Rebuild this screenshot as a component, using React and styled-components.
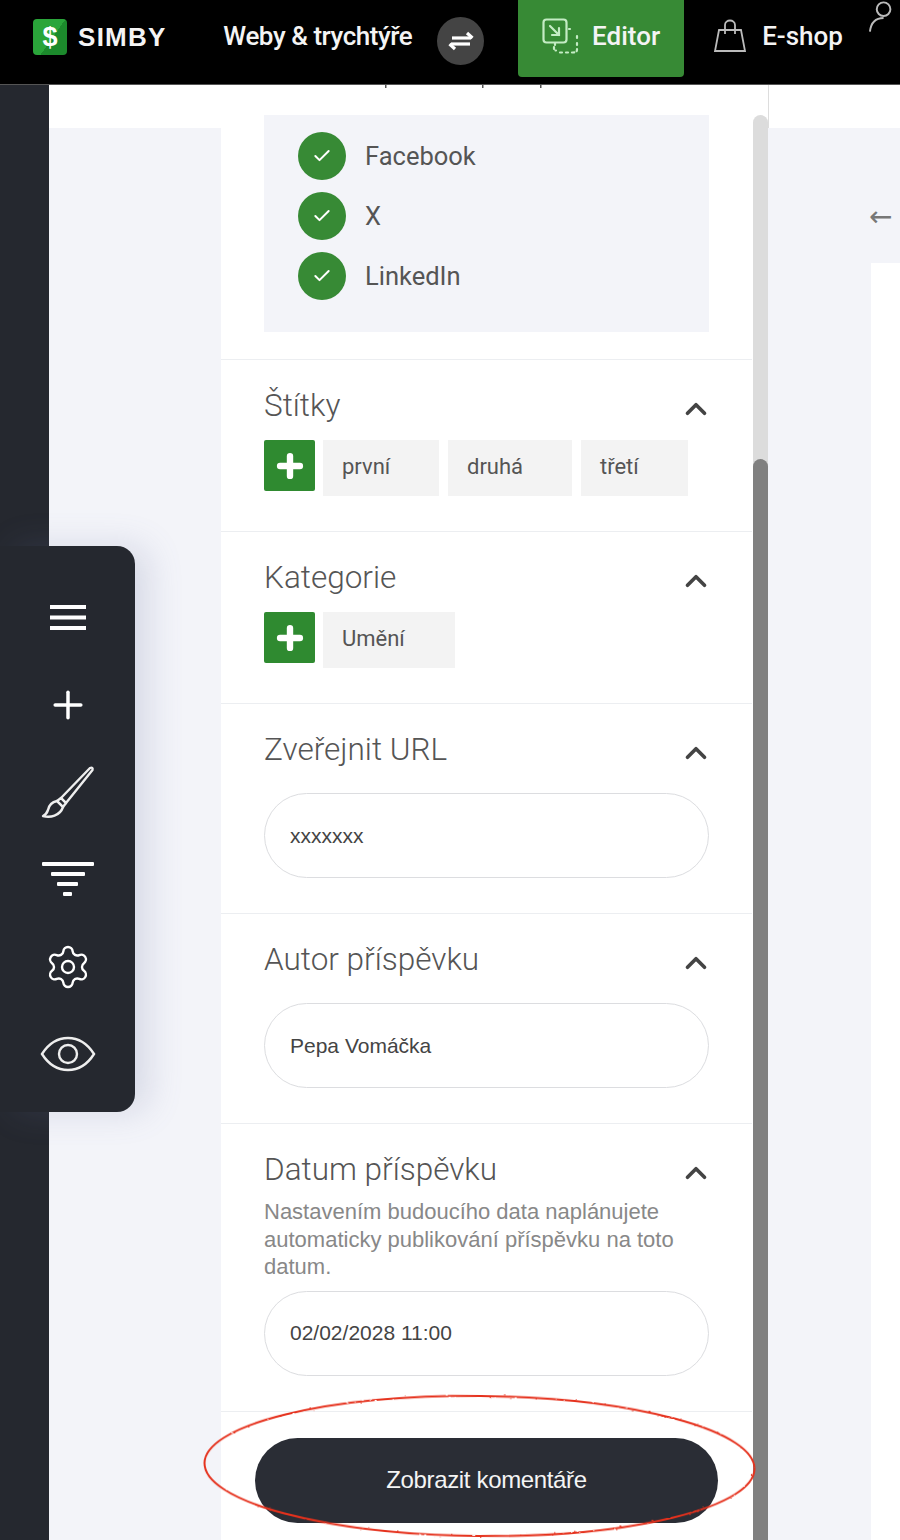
import styled, { createGlobalStyle } from "styled-components";
import { Check, ChevronUp, Plus, Settings } from "lucide-react";

const GlobalStyle = createGlobalStyle`
  html, body { margin: 0; padding: 0; background: #fff; }
  * { box-sizing: border-box; }
`;

const Page = styled.div`
  position: relative;
  width: 900px;
  height: 1540px;
  overflow: hidden;
  font-family: Roboto, "Liberation Sans", sans-serif;
`;

const Header = styled.header`
  display: flex;
  align-items: flex-start;
  height: 85px;
  padding-left: 33px;
  background: #000;
  color: #f4f4f4;
  border-bottom: 1px solid #555;
  white-space: nowrap;
`;

const Logo = styled.div`
  display: flex;
  align-items: center;
  justify-content: center;
  width: 35px;
  height: 36px;
  margin-top: 19px;
  border-radius: 4px;
  background: linear-gradient(125deg, #2aa53a 55%, #1c8a2c 55%);
  color: #fff;
  font: 700 27px "Liberation Sans", sans-serif;
`;

const Brand = styled.div`
  margin: 22px 0 0 11px;
  font: 700 26px/30px "Liberation Sans", sans-serif;
  letter-spacing: 1.2px;
  width: 149px;
`;

const NavText = styled.span`
  font-size: 26px;
  font-weight: 500;
  line-height: 30px;
`;

const SiteLink = styled(NavText)`
  margin-top: 21px;
  letter-spacing: -0.45px;
`;

const SwapButton = styled.div`
  display: flex;
  align-items: center;
  justify-content: center;
  width: 48px;
  height: 48px;
  margin: 17px 0 0 25px;
  border-radius: 50%;
  background: #444;
`;

const NavTab = styled.div`
  display: flex;
  align-items: center;
  gap: ${(p) => p.$gap}px;
  height: 77px;
  margin-left: ${(p) => p.$offset}px;
  padding: 0 24px 5px;
  border-radius: 0 0 4px 4px;
  background: ${(p) => (p.$active ? "#378a35" : "transparent")};
`;

const Main = styled.div`
  position: relative;
  display: flex;
  height: 1455px;
`;

const Rail = styled.div`
  width: 49px;
  background: #25282f;
`;

const Flyout = styled.nav`
  position: absolute;
  z-index: 1;
  left: 0;
  top: 461px;
  display: flex;
  flex-direction: column;
  align-items: center;
  width: 135px;
  height: 566px;
  padding-top: 43px;
  border-radius: 0 18px 18px 0;
  background: #25282f;
  box-shadow: 14px 0 34px rgba(105, 115, 160, 0.2);
`;

const FlyoutItem = styled.div`
  display: flex;
  align-items: center;
  justify-content: center;
  width: 60px;
  height: 60px;
  margin-bottom: 29px;
  color: #fff;
`;

const Gutter = styled.div`
  display: flex;
  flex-direction: column;
  width: ${(p) => p.$width}px;
  flex: ${(p) => (p.$grow ? 1 : "none")};
  background: #f3f4f9;
`;

const GutterCap = styled.div`
  height: 43px;
  background: #fff;
  border-left: ${(p) => (p.$line ? "1px solid #ddd" : "none")};
`;

const BackArrow = styled.div`
  margin: 74px 0 0 101px;
  color: #777;
  font: 28px/30px "DejaVu Sans", sans-serif;
  height: 61px;
`;

const Sheet = styled.div`
  flex: 1;
  margin-left: 103px;
  background: #fff;
`;

const Panel = styled.div`
  position: relative;
  z-index: 2;
  width: 547px;
  display: flex;
  background: #fff;
`;

const PanelBody = styled.div`
  width: 531px;
`;

const ClippedMarks = styled.svg`
  display: block;
  width: 531px;
  height: 30px;
`;

const SocialBox = styled.div`
  display: flex;
  flex-direction: column;
  gap: 12px;
  height: 217px;
  margin: 0 43px 27px;
  padding: 17px 34px;
  background: #f3f4f9;
`;

const SocialRow = styled.div`
  display: flex;
  align-items: center;
  gap: 19px;
  height: 48px;
  color: #555;
  font-size: 25.5px;
`;

const CheckDot = styled.span`
  display: flex;
  align-items: center;
  justify-content: center;
  width: 48px;
  height: 48px;
  border-radius: 50%;
  background: #378a35;
  color: #fff;
`;

const Section = styled.section`
  padding: 27px 43px 35px;
  border-top: 1px solid #eceef1;
`;

const SectionHead = styled.div`
  display: flex;
  align-items: center;
  justify-content: space-between;
  height: 36px;
  margin-bottom: ${(p) => p.$space}px;
  color: #555;
  font-size: 31.5px;
  font-weight: 300;
`;

const Toggle = styled(ChevronUp)`
  margin: 8px -4px 0 0;
  color: #444;
`;

const TagRow = styled.div`
  display: flex;
  gap: 9px;
  height: 56px;
`;

const AddButton = styled.div`
  display: flex;
  align-items: center;
  justify-content: center;
  width: 51px;
  height: 51px;
  margin-right: -1px;
  border-radius: 2px;
  background: #2f8a30;
  color: #fff;
`;

const Tag = styled.div`
  width: ${(p) => p.$width}px;
  padding: 14px 19px;
  background: #f3f3f3;
  color: #555;
  font-size: 22px;
  line-height: 26px;
`;

const Field = styled.div`
  display: flex;
  align-items: center;
  height: 85px;
  padding: 0 25px;
  border: 1.5px solid #dcdde0;
  border-radius: 43px;
  color: #444;
  font: 21px "Liberation Sans", sans-serif;
`;

const Hint = styled.p`
  margin: 0 0 10px;
  color: #888;
  font: 22px/27.5px "Liberation Sans", sans-serif;
`;

const ScrollTrack = styled.div`
  display: flex;
  flex-direction: column;
  width: 15px;
  margin: 30px 0 0 1px;
  padding-top: 344px;
  border-radius: 8px 8px 0 0;
  background: #dcdcdc;
`;

const ScrollThumb = styled.div`
  flex: 1;
  border-radius: 8px 8px 0 0;
  background: #808080;
`;

const CommentsButton = styled.div`
  display: flex;
  align-items: center;
  justify-content: center;
  height: 85px;
  margin: 0 34px 0;
  border-radius: 43px;
  background: #2a2d35;
  color: #f4f4f4;
  font: 24px "Liberation Sans", sans-serif;
  letter-spacing: -0.35px;
`;

const ButtonWrap = styled.div`
  padding-top: 26px;
  border-top: 1px solid #eceef1;
`;

const Annotation = styled.svg`
  position: absolute;
  z-index: 3;
  left: 0;
  top: 0;
  pointer-events: none;
`;

const SwapIcon = () => (
  <svg width="30" height="24" viewBox="0 0 30 24" fill="none" stroke="#fff" strokeWidth="3.2">
    <path d="M6 9h19" />
    <path d="M21 4l5.5 5" />
    <path d="M24 15H5" />
    <path d="M9 20l-5.5-5" />
  </svg>
);

const EditorIcon = () => (
  <svg width="38" height="37" viewBox="0 0 38 37" fill="none" stroke="#c4ecc4" strokeWidth="2.2" strokeLinecap="round">
    <rect x="1.5" y="1.5" width="23" height="23" rx="3" />
    <path d="M8 8l9 9M17 10v7h-7" />
    <path d="M13 25v2M12 29v3.5h2M18 34.5h2M24 34.5h2M30 34.5h1c3 0 4-1 4-3v-1M35 25v2M35 18v2M27 11h1" strokeDasharray="2 3" />
  </svg>
);

const BagIcon = () => (
  <svg width="34" height="34" viewBox="0 0 34 34" fill="none" stroke="#bbb" strokeWidth="1.8">
    <path d="M6 11h22l4 21H2z" />
    <path d="M12 15V6c0-6 10-6 10 0v9" />
  </svg>
);

const PersonIcon = () => (
  <svg width="34" height="34" viewBox="0 0 34 34" fill="none" stroke="#bbb" strokeWidth="2">
    <circle cx="17" cy="9" r="7" />
    <path d="M3 32c1-9 6-14 14-14" />
  </svg>
);

const MenuIcon = () => (
  <svg width="36" height="28" viewBox="0 0 36 28" fill="#fff">
    <rect y="1" width="36" height="4" />
    <rect y="11.5" width="36" height="4" />
    <rect y="22" width="36" height="4" />
  </svg>
);

const BrushIcon = () => (
  <svg width="54" height="54" viewBox="0 0 54 54" fill="none" stroke="#eee" strokeWidth="2.4" strokeLinejoin="round">
    <path d="M20 33L49 3c2-1 3 0 2.500 2L25 38z" />
    <path d="M16 36l4-3 5 5-3 4z" />
    <path d="M16 36c-5 1-8 4-9 9-1 3-3 5-5 6 7 2 17 0 20-9z" />
  </svg>
);

const FunnelIcon = () => (
  <svg width="52" height="38" viewBox="0 0 52 38" fill="#fff">
    <rect y="1" width="52" height="4" rx="1" />
    <rect x="9" y="11" width="34" height="4" rx="1" />
    <rect x="15" y="21" width="21" height="4" rx="1" />
    <rect x="21" y="31" width="9" height="4" rx="1" />
  </svg>
);

const EyeIcon = () => (
  <svg width="56" height="36" viewBox="0 0 56 36" fill="none" stroke="#eee" strokeWidth="2.4">
    <path d="M2 18C9 7 18 2 28 2s19 5 26 16c-7 11-16 16-26 16S9 29 2 18z" />
    <circle cx="28" cy="18" r="9" />
  </svg>
);

const checks = ["Facebook", "X", "LinkedIn"];
const labels = [
  { text: "první", width: 116 },
  { text: "druhá", width: 124 },
  { text: "třetí", width: 107 },
];

const TagList = ({ tags }) => (
  <TagRow>
    <AddButton>
      <Plus size={34} strokeWidth={4.5} />
    </AddButton>
    {tags.map((t) => (
      <Tag key={t.text} $width={t.width}>
        {t.text}
      </Tag>
    ))}
  </TagRow>
);

const Head = ({ title, space = 17 }) => (
  <SectionHead $space={space}>
    {title}
    <Toggle size={34} strokeWidth={2.6} />
  </SectionHead>
);

export default function App() {
  return (
    <Page>
      <GlobalStyle />
      <Header>
        <Logo>$</Logo>
        <Brand>SIMBY</Brand>
        <SiteLink>Weby &amp; trychtýře</SiteLink>
        <SwapButton>
          <SwapIcon />
        </SwapButton>
        <NavTab $active $offset={34} $gap={12}>
          <EditorIcon />
          <NavText>Editor</NavText>
        </NavTab>
        <NavTab $offset={5} $gap={15}>
          <BagIcon />
          <NavText>E-shop</NavText>
        </NavTab>
        <PersonIcon />
      </Header>

      <Main>
        <Rail />
        <Flyout>
          <FlyoutItem>
            <MenuIcon />
          </FlyoutItem>
          <FlyoutItem>
            <Plus size={44} strokeWidth={1.9} />
          </FlyoutItem>
          <FlyoutItem>
            <BrushIcon />
          </FlyoutItem>
          <FlyoutItem>
            <FunnelIcon />
          </FlyoutItem>
          <FlyoutItem>
            <Settings size={48} strokeWidth={1.2} />
          </FlyoutItem>
          <FlyoutItem>
            <EyeIcon />
          </FlyoutItem>
        </Flyout>

        <Gutter $width={172}>
          <GutterCap />
        </Gutter>

        <Panel>
          <PanelBody>
            <ClippedMarks viewBox="0 0 531 30" fill="#555">
              <rect x="164" y="0" width="1.500" height="3" />
              <rect x="261" y="0" width="1.500" height="3" />
              <rect x="319" y="0" width="1.500" height="3" />
            </ClippedMarks>
            <SocialBox>
              {checks.map((c) => (
                <SocialRow key={c}>
                  <CheckDot>
                    <Check size={20} strokeWidth={2.4} />
                  </CheckDot>
                  {c}
                </SocialRow>
              ))}
            </SocialBox>

            <Section>
              <Head title="Štítky" />
              <TagList tags={labels} />
            </Section>
            <Section>
              <Head title="Kategorie" />
              <TagList tags={[{ text: "Umění", width: 132 }]} />
            </Section>
            <Section>
              <Head title="Zveřejnit URL" space={26} />
              <Field>xxxxxxx</Field>
            </Section>
            <Section>
              <Head title="Autor příspěvku" space={26} />
              <Field>Pepa Vomáčka</Field>
            </Section>
            <Section>
              <Head title="Datum příspěvku" space={11} />
              <Hint>
                Nastavením budoucího data naplánujete automaticky publikování příspěvku na toto datum.
              </Hint>
              <Field>02/02/2028 11:00</Field>
            </Section>
            <ButtonWrap>
              <CommentsButton>Zobrazit komentáře</CommentsButton>
            </ButtonWrap>
          </PanelBody>
          <ScrollTrack>
            <ScrollThumb />
          </ScrollTrack>
        </Panel>

        <Gutter $grow>
          <GutterCap $line />
          <BackArrow>←</BackArrow>
          <Sheet />
        </Gutter>
      </Main>

      <Annotation width="900" height="1540" viewBox="0 0 900 1540" fill="none">
        <defs>
          <filter id="rough" x="-5%" y="-10%" width="110%" height="120%">
            <feTurbulence type="fractalNoise" baseFrequency="0.35" numOctaves="2" seed="4" />
            <feDisplacementMap in="SourceGraphic" scale="2" />
          </filter>
        </defs>
        <ellipse
          cx="479.500"
          cy="1466"
          rx="275"
          ry="70"
          stroke="#e5301c"
          strokeWidth="2"
          filter="url(#rough)"
          transform="rotate(0.6 479.500 1466)"
        />
      </Annotation>
    </Page>
  );
}
